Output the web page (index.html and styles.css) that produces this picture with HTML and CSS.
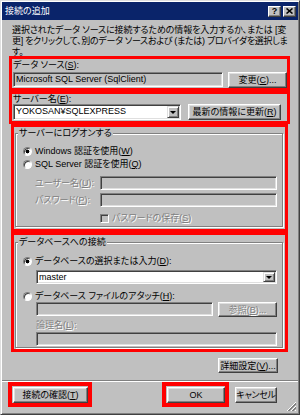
FILE: index.html
```html
<!DOCTYPE html>
<html lang="ja">
<head>
  <meta charset="UTF-8" />
  <title>接続の追加</title>
  <link rel="stylesheet" href="styles.css">
</head>
<body>

<div class="window">
  <div class="titlebar">
    <span class="title">接続の追加</span>
    <span class="tbtn help">?</span>
    <span class="tbtn close">
      <svg width="7" height="6" viewBox="0 0 7 6"><path d="M0.5 0.5 L6.5 5.5 M6.5 0.5 L0.5 5.5" stroke="#000" stroke-width="1.6" fill="none"/></svg>
    </span>
  </div>

  <p class="desc">選択されたデータ ソースに接続するための情報を入力するか、または [変<br><span class="tight">更] をクリックして、別のデータ ソースおよび (または) プロバイダを選択しま</span><br>す。</p>

  <div class="mark wide src">
    <div class="lbl">データ ソース(<u>S</u>):</div>
    <div class="row">
      <div class="field ro src-field">Microsoft SQL Server (SqlClient)</div>
      <button class="btn change">変更(<u>C</u>)...</button>
    </div>
  </div>

  <div class="mark wide srv">
    <div class="lbl short">サーバー名(<u>E</u>):</div>
    <div class="row">
      <div class="field combo srv-combo">YOKOSAN¥SQLEXPRESS<span class="drop"></span></div>
      <button class="btn refresh">最新の情報に更新(<u>R</u>)</button>
    </div>
  </div>

  <div class="mark narrow logon">
    <div class="group">
      <div class="legend">サーバーにログオンする</div>
      <div class="opt first"><span class="radio on"></span>Windows 認証を使用(<u>W</u>)</div>
      <div class="opt second"><span class="radio"></span>SQL Server 認証を使用(<u>Q</u>)</div>
      <div class="cred user">
        <span class="cred-lbl off">ユーザー名(<u>U</u>):</span>
        <div class="field off-field"></div>
      </div>
      <div class="cred pass">
        <span class="cred-lbl off">パスワード(<u>P</u>):</span>
        <div class="field off-field"></div>
      </div>
      <div class="save">
        <span class="check"></span><span class="off">パスワードの保存(<u>S</u>)</span>
      </div>
    </div>
  </div>

  <div class="mark narrow db">
    <div class="group">
      <div class="legend">データベースへの接続</div>
      <div class="opt first"><span class="radio on"></span>データベースの選択または入力(<u>D</u>):</div>
      <div class="field combo db-combo">master<span class="drop"></span></div>
      <div class="opt attach-opt"><span class="radio"></span>データベース ファイルのアタッチ(<u>H</u>):</div>
      <div class="attach">
        <div class="field off-field"></div>
        <button class="btn browse off" disabled>参照(<u>B</u>)...</button>
      </div>
      <div class="logical off">論理名(<u>L</u>):</div>
      <div class="field off-field logical-field"></div>
    </div>
  </div>

  <button class="btn advanced">詳細設定(<u>V</u>)...</button>

  <div class="sep"></div>

  <div class="actions">
    <div class="mark-btn"><button class="btn test">接続の確認(<u>T</u>)</button></div>
    <div class="mark-btn ok-mark"><button class="btn ok">OK</button></div>
    <button class="btn cancel">キャンセル</button>
  </div>

  <svg class="grip" width="11" height="11" viewBox="0 0 11 11">
    <path d="M10 1 L1 10 M10 5 L5 10 M10 9 L9 10" stroke="#fff" stroke-width="1"/>
    <path d="M10 2 L2 10 M10 3 L3 10 M10 6 L6 10 M10 7 L7 10" stroke="#808080" stroke-width="1"/>
  </svg>
</div>

</body>
</html>
```

FILE: styles.css
```css
body {
  margin: 0;
  font-family: "Liberation Sans", "Noto Sans CJK JP", sans-serif;
  font-size: 9px;
  font-feature-settings: "palt";
  color: #000;
  background: #c0c0c0;
}

u {
  text-decoration: underline;
}

.window {
  position: relative;
  box-sizing: border-box;
  width: 300px;
  height: 415px;
  padding: 1px;
  background: #c0c0c0;
  border: 1px solid;
  border-color: #dfdfdf #404040 #404040 #dfdfdf;
  box-shadow: inset 1px 1px #fff, inset -1px -1px #808080;
}

/* title bar */
.titlebar {
  display: flex;
  align-items: center;
  height: 18px;
  padding: 0 2px 0 3px;
  background: #0a246a;
  color: #fff;
}

.title {
  flex: 1;
  line-height: 18px;
}

.tbtn {
  display: flex;
  align-items: center;
  justify-content: center;
  box-sizing: border-box;
  width: 13px;
  height: 11px;
  background: #c0c0c0;
  color: #000;
  font-weight: bold;
  font-size: 9px;
  line-height: 9px;
  border: 1px solid;
  border-color: #fff #404040 #404040 #fff;
  box-shadow: inset -1px -1px #808080;
}

.tbtn.close {
  margin-left: 2px;
}

.desc {
  margin: 5px 0 0 10px;
  height: 31px;
  line-height: 11px;
  white-space: nowrap;
  letter-spacing: -0.1px;
}

.desc .tight {
  letter-spacing: -0.3px;
}

/* red highlight frames */
.mark {
  box-sizing: border-box;
  border: 3px solid #f00;
}

.wide {
  width: 281px;
  margin-left: 7px;
}

.narrow {
  width: 277px;
  margin-left: 9px;
}

.lbl {
  padding-left: 1px;
  line-height: 12px;
}

.lbl.short {
  line-height: 10px;
}

.row {
  display: flex;
  align-items: flex-start;
  padding-left: 1px;
}

.src .row {
  height: 17px;
}

.src-field {
  width: 210px;
  height: 15px;
  margin-top: 1px;
}

.change {
  width: 59px;
  height: 16px;
  margin: 1px 0 0 5px;
}

.srv .row {
  height: 16px;
  padding-bottom: 1px;
}

.srv-combo {
  width: 168px;
  height: 16px;
}

.refresh {
  width: 93px;
  height: 16px;
  margin-left: 7px;
}

/* sunken fields */
.field {
  position: relative;
  box-sizing: border-box;
  padding-left: 2px;
  line-height: 13px;
  white-space: nowrap;
  background: #fff;
  border: 1px solid;
  border-color: #808080 #fff #fff #808080;
  box-shadow: inset 1px 1px #404040, inset -1px -1px #dfdfdf;
}

.field.ro,
.off-field {
  background: #c0c0c0;
}

.combo .drop {
  position: absolute;
  top: 1px;
  right: 1px;
  bottom: 1px;
  box-sizing: border-box;
  width: 12px;
  display: flex;
  align-items: center;
  justify-content: center;
  background: #c0c0c0;
  border: 1px solid;
  border-color: #dfdfdf #404040 #404040 #dfdfdf;
  box-shadow: inset 1px 1px #fff, inset -1px -1px #808080;
}

.combo .drop::after {
  content: "";
  border-left: 3px solid transparent;
  border-right: 3px solid transparent;
  border-top: 3px solid #000;
}

/* raised buttons */
.btn {
  box-sizing: border-box;
  padding: 0;
  font: inherit;
  font-feature-settings: "palt";
  color: #000;
  line-height: 12px;
  white-space: nowrap;
  background: #c0c0c0;
  border: 1px solid;
  border-color: #fff #404040 #404040 #fff;
  box-shadow: inset -1px -1px #808080, inset 1px 1px #dfdfdf;
}

/* group boxes */
.group {
  border: 1px solid #808080;
  box-shadow: inset 1px 1px #fff, 1px 1px #fff;
  padding: 0 5px 2px 7px;
  margin: 6px 2px 2px 1px;
}

.db .group {
  margin: 7px 2px 1px 1px;
  padding-bottom: 1px;
}

.legend {
  width: fit-content;
  margin: -7px 0 0 -5px;
  padding: 0 1px;
  line-height: 12px;
  background: #c0c0c0;
}

.opt {
  display: flex;
  align-items: center;
  height: 12px;
  line-height: 12px;
}

.opt.first {
  margin-top: 6px;
}

.db .opt.first {
  margin-top: 7px;
}

.opt.second {
  margin-top: 1px;
}

.radio {
  box-sizing: border-box;
  width: 9px;
  height: 9px;
  margin-right: 3px;
  border-radius: 50%;
  background: #fff;
  border: 1px solid;
  border-color: #808080 #fff #fff #808080;
  box-shadow: inset 1px 1px #404040;
}

.radio.on {
  background: radial-gradient(circle, #000 1.6px, #fff 2.2px);
}

.off {
  color: #808080;
  text-shadow: 1px 1px 0 #fff;
}

.cred {
  display: flex;
  align-items: center;
  height: 14px;
  margin-left: 12px;
}

.cred.user {
  margin-top: 6px;
}

.cred.pass {
  margin-top: 3px;
}

.cred-lbl {
  width: 65px;
  line-height: 12px;
}

.cred .field {
  flex: 1;
  height: 14px;
}

.save {
  display: flex;
  align-items: center;
  height: 12px;
  margin: 5px 0 0 77px;
  line-height: 12px;
}

.check {
  box-sizing: border-box;
  width: 9px;
  height: 9px;
  margin-right: 3px;
  background: #c0c0c0;
  border: 1px solid;
  border-color: #808080 #fff #fff #808080;
  box-shadow: inset 1px 1px #404040;
}

.db-combo {
  height: 14px;
  margin: 3px 0 0 13px;
  line-height: 12px;
}

.attach-opt {
  margin-top: 6px;
}

.attach {
  display: flex;
  height: 15px;
  margin-left: 13px;
}

.attach .field {
  width: 177px;
  height: 14px;
}

.browse {
  width: 59px;
  height: 15px;
  margin-left: 5px;
}

.logical {
  margin: 3px 0 0 13px;
  line-height: 11px;
}

.logical-field {
  height: 14px;
  margin: 1px 0 0 13px;
}

/* bottom area */
.advanced {
  display: block;
  width: 60px;
  height: 15px;
  margin: 6px 20px 0 auto;
}

.sep {
  margin-top: 7px;
  border-top: 1px solid #808080;
  border-bottom: 1px solid #fff;
}

.actions {
  display: flex;
  align-items: flex-start;
  margin: 0 21px 0 6px;
}

.mark-btn {
  border: 4px solid #f00;
  padding: 1px 0 0 1px;
  line-height: 0;
}

.ok-mark {
  margin-left: auto;
}

.test {
  width: 75px;
  height: 16px;
}

.ok {
  width: 58px;
  height: 16px;
}

.cancel {
  width: 42px;
  height: 16px;
  margin: 5px 0 0 6px;
  letter-spacing: -0.3px;
}

.grip {
  position: absolute;
  right: 2px;
  bottom: 2px;
}
```
